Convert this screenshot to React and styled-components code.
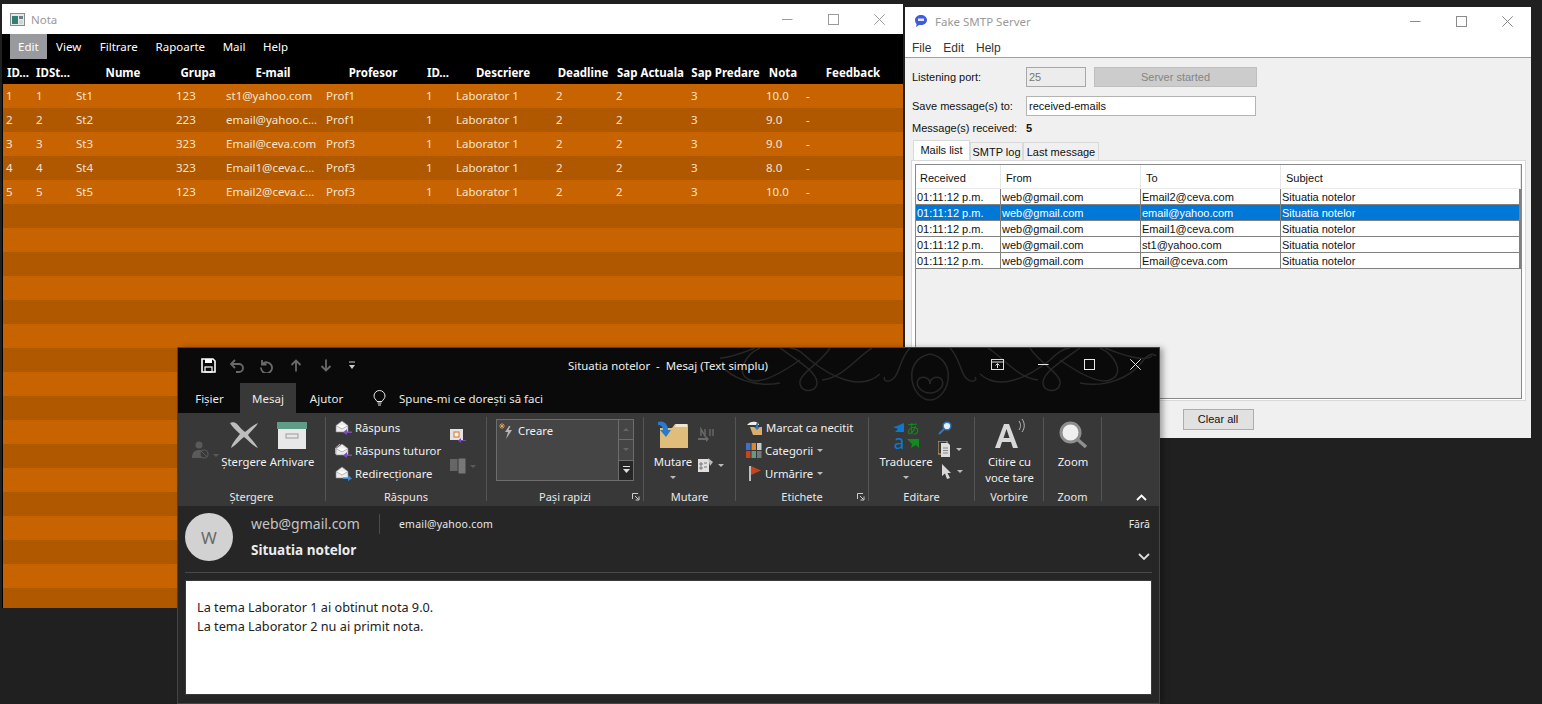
import React from 'react'
import styled, { createGlobalStyle } from 'styled-components'

const Global = createGlobalStyle`
  html, body { margin: 0; padding: 0; background: #202020; }
  body { width: 1542px; height: 704px; overflow: hidden; font-family: "Noto Sans", "Open Sans", sans-serif; }
  * { box-sizing: border-box; }
`

const Desktop = styled.div`
  position: relative;
  width: 1542px;
  height: 704px;
  background: #202020;
  overflow: hidden;
`

/* windows sit on a free canvas */
const Win = styled.div`
  position: absolute;
  left: ${p => p.$x}px;
  top: ${p => p.$y}px;
  width: ${p => p.$w}px;
  height: ${p => p.$h}px;
  display: flex;
  flex-direction: column;
  background: ${p => p.$bg};
  box-shadow: ${p => p.$shadow || 'none'};
`

const TitleBar = styled.div`
  display: flex;
  align-items: center;
  flex: none;
  height: ${p => p.$h}px;
  padding-left: ${p => p.$pad}px;
  padding-right: 1px;
  background: #fff;
  color: #9a9a9a;
  font-size: 11.5px;
`

const TitleText = styled.span`
  flex: 1;
  margin-left: ${p => p.$gap}px;
`

const CaptionBtns = styled.div`
  display: flex;
  align-items: center;
  color: ${p => p.$color};
`

const CaptionBtn = styled.span`
  display: flex;
  align-items: center;
  justify-content: center;
  width: ${p => p.$w || 46}px;
  height: 28px;
`

/* Nota window */
const NotaMenu = styled.div`
  display: flex;
  flex: none;
  height: 26px;
  padding-left: 8px;
  background: #000;
  color: #fff;
  font-size: 11.5px;
`

const NotaMenuItem = styled.div`
  display: flex;
  align-items: center;
  height: 25px;
  padding: 0 ${p => p.$pad}px;
  background: ${p => (p.$on ? '#989a9d' : 'transparent')};
`

const COLS = '30px 40px 100px 50px 100px 100px 30px 100px 60px 75px 75px 40px 100px'

const Grid = styled.div`
  display: grid;
  grid-template-columns: ${COLS};
  height: 24px;
  flex: none;
  align-items: center;
  font-size: 11.5px;
  background: ${p => p.$bg};
  color: #fff;
`

const Head = styled.div`
  text-align: center;
  font-weight: 700;
  white-space: nowrap;
  overflow: hidden;
`

const Cell = styled.div`
  padding-left: 3px;
  margin-top: -2px;
  color: #f3e6d8;
  white-space: nowrap;
`

const NotaBody = styled.div`
  flex: 1;
  margin-left: 1px;
  overflow: hidden;
  display: flex;
  flex-direction: column;
  background: #000;
`

/* SMTP window */
const SmtpMenu = styled.div`
  display: flex;
  flex: none;
  gap: 12px;
  align-items: center;
  height: 23px;
  padding: 3px 0 0 7px;
  background: #fff;
  border-bottom: 1px solid #a0a0a0;
  color: #333;
  font: 12px "Liberation Sans", sans-serif;
`

const SmtpBody = styled.div`
  flex: 1;
  display: flex;
  flex-direction: column;
  padding: 9px 5px 0 7px;
  background: #f0f0f0;
  color: #111;
  font: 11px "Liberation Sans", sans-serif;
`

const Field = styled.div`
  display: flex;
  align-items: center;
  height: ${p => p.$h}px;
  margin-bottom: ${p => p.$mb}px;
`

const Label = styled.span`
  width: 114px;
  flex: none;
`

const Input = styled.div`
  display: flex;
  align-items: center;
  width: ${p => p.$w}px;
  height: 20px;
  padding-left: 2px;
  border: 1px solid ${p => (p.$off ? '#a8a8a8' : '#b4b4b4')};
  background: ${p => (p.$off ? '#ececec' : '#fff')};
  color: ${p => (p.$off ? '#777' : '#111')};
`

const StartedBtn = styled.div`
  display: flex;
  align-items: center;
  justify-content: center;
  width: 163px;
  height: 20px;
  margin-left: 8px;
  background: #cccccc;
  border: 1px solid #bfbfbf;
  color: #858585;
`

const Count = styled.b`
  font-size: 11px;
`

const Tabs = styled.div`
  display: flex;
  align-items: flex-end;
  height: 20px;
  margin-left: 1px;
`

const Tab = styled.div`
  display: flex;
  align-items: center;
  justify-content: center;
  width: ${p => p.$w}px;
  height: ${p => (p.$on ? 20 : 18)}px;
  padding-bottom: ${p => (p.$on ? 2 : 0)}px;
  background: ${p => (p.$on ? '#fff' : '#f0f0f0')};
  border: 1px solid #d9d9d9;
  border-bottom: none;
  white-space: nowrap;
`

const TabPane = styled.div`
  height: 241px;
  margin-left: -1px;
  padding: 3px;
  background: #fff;
  border: 1px solid #d9d9d9;
`

const MailTable = styled.div`
  height: 235px;
  background: #f0f0f0;
  border: 1px solid #888;
`

const MAIL_COLS = '85px 140px 140px 1fr'

const MailHead = styled.div`
  display: grid;
  grid-template-columns: ${MAIL_COLS};
  height: 24px;
  background: #fff;
  border-bottom: 1px solid #eaeaea;
`

const MailHeadCell = styled.div`
  display: flex;
  align-items: center;
  padding: 3px 0 0 ${p => p.$pad}px;
  border-right: 1px solid #e6e6e6;
`

const MailRow = styled.div`
  display: grid;
  grid-template-columns: ${MAIL_COLS};
  height: 16px;
  background: ${p => (p.$sel ? '#0078d7' : '#fff')};
  color: ${p => (p.$sel ? '#fff' : '#111')};
  border-bottom: 1px solid #808080;
  border-right: 1px solid #808080;
`

const MailCell = styled.div`
  display: flex;
  align-items: center;
  padding-left: 1px;
  border-right: 1px solid #808080;
  white-space: nowrap;
`

const SmtpFoot = styled.div`
  display: flex;
  justify-content: center;
  padding: 8px 0 0 0;
  margin-left: -2px;
`

const ClearBtn = styled.div`
  display: flex;
  align-items: center;
  justify-content: center;
  width: 71px;
  height: 21px;
  padding-bottom: 1px;
  background: #e1e1e1;
  border: 1px solid #adadad;
  font-size: 11px;
`

/* Outlook window */
const TitleArea = styled.div`
  position: relative;
  flex: none;
  height: 65px;
  background: #0a0a0a;
`

const Swirl = styled.svg`
  position: absolute;
  left: 542px;
  top: 0;
  pointer-events: none;
`

const OutlookTitle = styled.div`
  position: relative;
  display: flex;
  align-items: center;
  height: 32px;
  padding-top: 3px;
  color: #eee;
  font-size: 11.4px;
`

const Qat = styled.div`
  display: flex;
  align-items: center;
  gap: 14px;
  width: 390px;
  padding-left: 23px;
`

const OutlookCaption = styled.div`
  white-space: nowrap;
`

const OutlookCtl = styled.div`
  position: absolute;
  right: 1px;
  top: 2px;
  display: flex;
  align-items: center;
`

const OutlookTabs = styled.div`
  position: relative;
  display: flex;
  align-items: flex-end;
  height: 33px;
  padding-left: 5px;
  color: #e8e8e8;
  font-size: 11.5px;
`

const OTab = styled.div`
  display: flex;
  align-items: center;
  justify-content: center;
  width: ${p => p.$w}px;
  height: 30px;
  padding-right: ${p => p.$pr || 0}px;
  background: ${p => (p.$on ? '#383838' : 'transparent')};
`

const Ask = styled.div`
  display: flex;
  align-items: center;
  gap: 13px;
  height: 30px;
  margin-left: 16px;
`

const Ribbon = styled.div`
  display: flex;
  flex: none;
  height: 93px;
  background: #383838;
  color: #f0f0f0;
  font-size: 11.3px;
`

const Group = styled.div`
  position: relative;
  display: flex;
  flex-direction: column;
  flex: none;
  width: ${p => p.$w}px;
  height: 84px;
  margin-top: 4px;
  border-right: ${p => (p.$plain ? 'none' : '1px solid #555')};
`

const GroupBody = styled.div`
  display: flex;
  flex: 1;
  padding: ${p => p.$pad || '0'};
  min-height: 0;
`

const GroupLabel = styled.div`
  height: 14px;
  line-height: 20px;
  text-align: center;
  font-size: 11px;
  color: #e8e8e8;
`

const Collapse = styled(GroupLabel)`
  text-align: right;
  padding-right: 10px;
`

const Launcher = styled.svg`
  position: absolute;
  right: 3px;
  bottom: 0;
`

const BigBtn = styled.div`
  display: flex;
  flex-direction: column;
  align-items: center;
  width: ${p => p.$w}px;
  flex: none;
  margin-left: ${p => p.$ml || 0}px;
  line-height: 16px;
  text-align: center;
  white-space: nowrap;
`

const BigIcon = styled.div`
  display: flex;
  align-items: flex-end;
  justify-content: center;
  height: 32px;
  margin-bottom: 5px;
`

const TranslateIcon = styled.div`
  display: grid;
  grid-template-columns: 14px 14px;
  grid-template-rows: 14px 14px;
  align-items: center;
  justify-items: center;
`

const TranslateGlyph = styled.span`
  color: ${p => p.$c};
  font-family: ${p => p.$font};
  font-size: ${p => p.$size}px;
  line-height: 14px;
`

const Caret = styled.span`
  display: inline-block;
  width: 0;
  height: 0;
  margin-left: ${p => p.$ml || 0}px;
  margin-top: ${p => p.$mt || 0}px;
  border-left: 3px solid transparent;
  border-right: 3px solid transparent;
  border-${p => (p.$up ? 'bottom' : 'top')}: 3px solid ${p => p.$c || '#bbb'};
`

const Stack = styled.div`
  display: flex;
  flex-direction: column;
  gap: ${p => p.$gap || 0}px;
  width: ${p => p.$w || 'auto'};
  padding-top: ${p => p.$top || 0}px;
  margin-left: ${p => p.$ml || 0}px;
  margin-top: ${p => p.$mt || 0}px;
  flex: none;
`

const SmallBtn = styled.div`
  display: flex;
  align-items: center;
  gap: 3px;
  height: ${p => p.$h || 23}px;
  margin-left: ${p => p.$ml || 0}px;
  white-space: nowrap;
`

const IconBox = styled.span`
  display: flex;
  justify-content: center;
  flex: none;
  width: ${p => p.$w || 16}px;
  padding-top: ${p => p.$top || 0}px;
`

const GalleryBox = styled.div`
  display: flex;
  width: 138px;
  height: 62px;
  border: 1px solid #6d6d6d;
  background: #454545;
`

const GalleryItem = styled.div`
  flex: 1;
  display: flex;
  align-items: flex-start;
  gap: 2px;
  padding: 3px 0 0 2px;
  line-height: 16px;
`

const GalleryScroll = styled.div`
  display: flex;
  flex-direction: column;
  width: 15px;
  border-left: 1px solid #6d6d6d;
`

const ScrollBtn = styled.div`
  display: flex;
  align-items: center;
  justify-content: center;
  flex: 1;
  border-bottom: 1px solid #6d6d6d;
  background: ${p => (p.$dark ? '#262626' : 'transparent')};
  &:last-child { border-bottom: none; }
`

const MailHeader = styled.div`
  position: relative;
  flex: none;
  height: 74px;
  padding: 7px 8px 0 7px;
  background: #262626;
  display: flex;
`

const HeadRule = styled.div`
  position: absolute;
  left: 7px;
  right: 7px;
  bottom: 7px;
  height: 1px;
  background: #4a4a4a;
`

const Avatar = styled.div`
  display: flex;
  align-items: center;
  justify-content: center;
  width: 48px;
  height: 48px;
  border-radius: 50%;
  background: #d2d2d2;
  color: #6a6a6a;
  font-size: 17px;
`

const HeadText = styled.div`
  display: flex;
  flex-direction: column;
  margin-left: 18px;
  flex: 1;
`

const FromLine = styled.div`
  display: flex;
  align-items: center;
  height: 21px;
`

const FromName = styled.span`
  color: #c4c4c4;
  font-size: 14px;
  width: 128px;
`

const FromSep = styled.span`
  width: 1px;
  height: 20px;
  background: #4a4a4a;
`

const ToName = styled.span`
  margin-left: 19px;
  color: #e8e8e8;
  font-size: 10.5px;
  letter-spacing: 0.2px;
  flex: 1;
`

const Fara = styled.span`
  color: #e8e8e8;
  font-size: 10.5px;
  margin-right: 1px;
`

const SubjectLine = styled.div`
  display: flex;
  justify-content: space-between;
  align-items: center;
  margin-top: 6px;
  color: #ececec;
  font-size: 13.5px;
  font-weight: 700;
`

const Chevron = styled.svg`
  margin: 13px 1px 0 0;
`

const MailBody = styled.div`
  flex: none;
  height: 115px;
  margin: 0 7px;
  padding: 17px 11px;
  background: #fff;
  border: 1px solid #3a3a3a;
  color: #222;
  font-size: 12.7px;
  line-height: 19px;
`

const OutlookFoot = styled.div`
  flex: 1;
  background: #262626;
`

const Mn = ({ c }) => <svg width="11" height="11" viewBox="0 0 11 11"><path d="M0 5.5h10.5" stroke={c} /></svg>
const Mx = ({ c }) => <svg width="11" height="11" viewBox="0 0 11 11"><rect x=".5" y=".5" width="10" height="10" fill="none" stroke={c} /></svg>
const Cl = ({ c }) => <svg width="11" height="11" viewBox="0 0 11 11"><path d="M.3.3l10.4 10.4M10.7.3L.3 10.7" stroke={c} /></svg>

const Caption = ({ c }) => (
  <CaptionBtns $color={c}>
    <CaptionBtn><Mn c={c} /></CaptionBtn>
    <CaptionBtn><Mx c={c} /></CaptionBtn>
    <CaptionBtn><Cl c={c} /></CaptionBtn>
  </CaptionBtns>
)

const rows = [
  ['1', '1', 'St1', '123', 'st1@yahoo.com', 'Prof1', '10.0'],
  ['2', '2', 'St2', '223', 'email@yahoo.c...', 'Prof1', '9.0'],
  ['3', '3', 'St3', '323', 'Email@ceva.com', 'Prof3', '9.0'],
  ['4', '4', 'St4', '323', 'Email1@ceva.c...', 'Prof3', '8.0'],
  ['5', '5', 'St5', '123', 'Email2@ceva.c...', 'Prof3', '10.0'],
]
const heads = ['ID...', 'IDSt...', 'Nume', 'Grupa', 'E-mail', 'Profesor', 'ID...', 'Descriere', 'Deadline', 'Sap Actuala', 'Sap Predare', 'Nota', 'Feedback']
const mails = ['Email2@ceva.com', 'email@yahoo.com', 'Email1@ceva.com', 'st1@yahoo.com', 'Email@ceva.com']

const NotaWindow = () => (
  <Win $x={2} $y={4} $w={901} $h={604} $bg="#000">
    <TitleBar $h={30} $pad={8}>
      <svg width="15" height="13" viewBox="0 0 15 13">
        <rect x=".5" y=".5" width="14" height="12" fill="#e8e8e8" stroke="#8a8a8a" />
        <rect x="2" y="3" width="6" height="8" fill="#2f7f72" />
        <rect x="9" y="3" width="4" height="3" fill="#6a7f8a" />
        <rect x="9" y="7" width="4" height="4" fill="#cfd6d8" />
      </svg>
      <TitleText $gap={6}>Nota</TitleText>
      <Caption c="#9a9a9a" />
    </TitleBar>
    <NotaMenu>
      <NotaMenuItem $on $pad={8}>Edit</NotaMenuItem>
      <NotaMenuItem $pad={9.5}>View</NotaMenuItem>
      <NotaMenuItem $pad={9}>Filtrare</NotaMenuItem>
      <NotaMenuItem $pad={8.8}>Rapoarte</NotaMenuItem>
      <NotaMenuItem $pad={8.8}>Mail</NotaMenuItem>
      <NotaMenuItem $pad={8.8}>Help</NotaMenuItem>
    </NotaMenu>
    <NotaBody>
      <Grid $bg="#000">{heads.map((h, i) => <Head key={i}>{h}</Head>)}</Grid>
      {Array.from({ length: 22 }).map((_, i) => {
        const r = rows[i]
        const bg = i % 2 ? '#b05800' : '#c76300'
        return (
          <Grid key={i} $bg={bg}>
            {r && [r[0], r[1], r[2], r[3], r[4], r[5], '1', 'Laborator 1', '2', '2', '3', r[6], '-'].map((c, j) => <Cell key={j}>{c}</Cell>)}
          </Grid>
        )
      })}
    </NotaBody>
  </Win>
)

const SmtpWindow = () => (
  <Win $x={905} $y={7} $w={626} $h={431} $bg="#fff">
    <TitleBar $h={28} $pad={9}>
      <svg width="14" height="14" viewBox="0 0 14 14">
        <path d="M1 6c0-3 3-5 6-5s6 2 6 5-3 5-6 5H5l-3 2 .6-3C1.500 9 1 7.500 1 6z" fill="#3d5ce0" />
        <rect x="4" y="4.500" width="6" height="2.500" fill="#e4e8fa" />
      </svg>
      <TitleText $gap={7}>Fake SMTP Server</TitleText>
      <Caption c="#8a8a8a" />
    </TitleBar>
    <SmtpMenu><span>File</span><span>Edit</span><span>Help</span></SmtpMenu>
    <SmtpBody>
      <Field $h={20} $mb={9}>
        <Label>Listening port:</Label>
        <Input $off $w={60}>25</Input>
        <StartedBtn>Server started</StartedBtn>
      </Field>
      <Field $h={20} $mb={5}>
        <Label>Save message(s) to:</Label>
        <Input $w={230}>received-emails</Input>
      </Field>
      <Field $h={14} $mb={5}>
        <Label>Message(s) received:</Label>
        <Count>5</Count>
      </Field>
      <Tabs>
        <Tab $on $w={57}>Mails list</Tab>
        <Tab $w={53}>SMTP log</Tab>
        <Tab $w={76}>Last message</Tab>
      </Tabs>
      <TabPane>
        <MailTable>
          <MailHead>
            <MailHeadCell $pad={4}>Received</MailHeadCell>
            <MailHeadCell $pad={5}>From</MailHeadCell>
            <MailHeadCell $pad={5}>To</MailHeadCell>
            <MailHeadCell $pad={5}>Subject</MailHeadCell>
          </MailHead>
          {mails.map((m, i) => (
            <MailRow key={m} $sel={i === 1}>
              <MailCell>01:11:12 p.m.</MailCell>
              <MailCell>web@gmail.com</MailCell>
              <MailCell>{m}</MailCell>
              <MailCell>Situatia notelor</MailCell>
            </MailRow>
          ))}
        </MailTable>
      </TabPane>
      <SmtpFoot><ClearBtn>Clear all</ClearBtn></SmtpFoot>
    </SmtpBody>
  </Win>
)

const Reply = ({ arrow = '#7b4db8', all, forward }) => (
  <svg width="17" height="15" viewBox="0 0 17 15">
    {all && <path d="M.5 11V5L5 1" fill="none" stroke="#bbb" />}
    <path d="M1 5.500L7 1l6 4.500V12H1z" fill="#ececec" stroke="#8a8a8a" strokeWidth=".6" />
    <path d="M1 5.500L7 9l6-3.500" fill="#fff" stroke="#8a8a8a" strokeWidth=".6" />
    {forward
      ? <path d="M8 11.500h5V9l4 3.500-4 2.500v-2H8z" fill="#3f86d0" />
      : <path d="M17 11.500h-5V9l-4 3.500 4 2.500v-2h5z" fill={arrow} />}
  </svg>
)

const Launch = () => (
  <Launcher width="8" height="8" viewBox="0 0 8 8">
    <path d="M.5 6V.5H6" fill="none" stroke="#ccc" />
    <path d="M3 3l3.500 3.500M7 3.500V7H3.500" fill="none" stroke="#ccc" />
  </Launcher>
)

const half = [
  'M0 6C12 8 20 18 18 32 16 46 6 52 0 52',
  'M0 36C0 29 9 27 12 32 15 38 8 45 0 45',
  'M20 0C30 10 30 24 36 30 42 36 48 32 45 29',
  'M50 26C70 44 100 28 120 12 126 6 134 0 140 0',
  'M58 0C76 12 88 30 108 32',
  'M100 0C108 14 132 26 130 36 128 46 112 44 113 34 114 24 130 14 150 0',
  'M130 12C150 26 170 36 180 32 196 26 184 6 170 0',
  'M150 35C175 40 200 30 212 14 216 8 222 4 226 8',
  'M175 0C195 8 215 14 222 8',
]

const Ornament = () => (
  <Swirl width="439" height="54" viewBox="0 0 439 54" fill="none" stroke="#272727" strokeWidth="1.5">
    <g transform="translate(210 0)">{half.map(d => <path key={d} d={d} />)}</g>
    <g transform="translate(210 0) scale(-1 1)">{half.map(d => <path key={d} d={d} />)}</g>
  </Swirl>
)

const Ribbons = () => (
  <Ribbon>
    <Group $w={148}>
      <GroupBody $pad="0 0 0 10px">
        <IconBox $w={34} $top={4}>
          <svg width="34" height="40" viewBox="0 0 34 40">
            <circle cx="11" cy="24" r="3.500" fill="#5a5a5a" />
            <path d="M4 37c0-6 3-8 7-8s7 2 7 8z" fill="#5a5a5a" />
            <circle cx="16" cy="33" r="4" fill="#383838" stroke="#5a5a5a" strokeWidth="1.200" />
            <path d="M13 30l6 6" stroke="#5a5a5a" />
            <path d="M25 33h6l-3 3z" fill="#5a5a5a" />
          </svg>
        </IconBox>
        <BigBtn $w={44}>
          <BigIcon>
            <svg width="30" height="27" viewBox="0 0 30 27">
              <path d="M1 1c2-1 5-1 7 1 3 3 5 6 8 8 4-3 8-7 13-9-2 4-7 8-10 12 3 4 7 8 10 13-5-2-10-8-14-11-4 3-8 8-13 11 1-5 6-10 9-14C7 8 3 5 1 1z" fill="#bdbdbd" />
            </svg>
          </BigIcon>
          Ștergere
        </BigBtn>
        <BigBtn $w={48} $ml={2}>
          <BigIcon>
            <svg width="30" height="27" viewBox="0 0 30 27">
              <rect x="0" y="0" width="30" height="7" fill="#5f9c86" />
              <rect x="1" y="7" width="28" height="20" fill="#e8e8e8" />
              <rect x="9" y="12" width="12" height="4" fill="none" stroke="#9a9a9a" />
            </svg>
          </BigIcon>
          Arhivare
        </BigBtn>
      </GroupBody>
      <GroupLabel>Ștergere</GroupLabel>
    </Group>
    <Group $w={161}>
      <GroupBody $pad="0 0 0 9px">
        <Stack $w="115px" $mt={-1}>
          <SmallBtn><Reply /> Răspuns</SmallBtn>
          <SmallBtn><Reply all /> Răspuns tuturor</SmallBtn>
          <SmallBtn><Reply forward /> Redirecționare</SmallBtn>
        </Stack>
        <Stack $gap={15} $top={12}>
          <svg width="16" height="14" viewBox="0 0 16 14">
            <rect x="0" y="0" width="13" height="11" fill="#e2e2e2" />
            <rect x="4" y="3" width="5" height="5" fill="#f4f4f4" stroke="#d9722a" />
            <path d="M16 11h-5V9l-3 2.500 3 2.500v-2h5z" fill="#7b4db8" />
          </svg>
          <SmallBtn $h={16}>
            <svg width="16" height="16" viewBox="0 0 16 16">
              <rect x="0" y="1" width="10" height="12" fill="#666" />
              <rect x="8" y="0" width="8" height="16" rx="1" fill="#777" stroke="#383838" />
            </svg>
            <Caret $c="#5a5a5a" $ml={1} />
          </SmallBtn>
        </Stack>
      </GroupBody>
      <GroupLabel>Răspuns</GroupLabel>
    </Group>
    <Group $w={157}>
      <GroupBody $pad="2px 0 0 9px">
        <GalleryBox>
          <GalleryItem>
            <svg width="17" height="17" viewBox="0 0 17 17">
              <path d="M10 3L6 9h3l-2 7 6-9H9.500l2-4z" fill="#b5b5b5" />
              <path d="M3 0v6M0 3h6M1 1l4 4M5 1L1 5" stroke="#e8a85a" strokeWidth=".8" />
            </svg>
            Creare
          </GalleryItem>
          <GalleryScroll>
            <ScrollBtn><Caret $up $c="#666" /></ScrollBtn>
            <ScrollBtn><Caret $c="#666" /></ScrollBtn>
            <ScrollBtn $dark>
              <svg width="9" height="8" viewBox="0 0 9 8"><path d="M1 .5h7" stroke="#ddd" /><path d="M1 3h7L4.500 7z" fill="#ddd" /></svg>
            </ScrollBtn>
          </GalleryScroll>
        </GalleryBox>
      </GroupBody>
      <GroupLabel>Pași rapizi</GroupLabel>
      <Launch />
    </Group>
    <Group $w={92}>
      <GroupBody $pad="0 0 0 9px">
        <BigBtn $w={40}>
          <BigIcon>
            <svg width="32" height="29" viewBox="0 0 32 29">
              <path d="M3 8h12l3-4h12a1 1 0 0 1 1 1v23H3z" fill="#e0bd7a" />
              <path d="M19 4h11v3H18z" fill="#f1e6d0" />
              <path d="M1 2c6-2 10 2 10 8h3l-5 7-6-7h3c0-3-2-5-5-5z" fill="#2b79c9" />
            </svg>
          </BigIcon>
          Mutare
          <Caret $mt={6} />
        </BigBtn>
        <Stack $gap={15} $top={10} $ml={5}>
          <svg width="17" height="16" viewBox="0 0 17 16">
            <path d="M0 11h8V9l3 3-3 3v-2H0z" fill="#6a6a6a" />
            <path d="M3 9V2l4 7V2M12 2v7M15 2v7" fill="none" stroke="#6a6a6a" strokeWidth="1.400" />
          </svg>
          <SmallBtn $h={14}>
            <svg width="16" height="14" viewBox="0 0 16 14">
              <rect x="0" y="1" width="11" height="13" fill="#e0e0e0" />
              <path d="M2 5h2v2H2zM2 9h2v2H2zM6 5h3M6 9h3" stroke="#777" fill="none" />
              <path d="M10 0l5 4-3 4z" fill="#bbb" />
            </svg>
            <Caret $ml={1} />
          </SmallBtn>
        </Stack>
      </GroupBody>
      <GroupLabel>Mutare</GroupLabel>
    </Group>
    <Group $w={133}>
      <GroupBody $pad="0 0 0 10px">
        <Stack $mt={-1}>
          <SmallBtn>
            <svg width="17" height="15" viewBox="0 0 17 15">
              <path d="M1 5c2-3 6-4 9-3 2 1 3 2 3 3H1z" fill="#eee" />
              <path d="M4 7h12v8H7z" fill="#d8ae6c" />
              <path d="M12 2v5h2l-3 3-3-3h2V4z" fill="#2b79c9" />
            </svg>
            Marcat ca necitit
          </SmallBtn>
          <SmallBtn>
            <svg width="16" height="15" viewBox="0 0 16 15">
              <rect x="0" y="0" width="4.500" height="7" fill="#3d72c8" />
              <rect x="5.500" y="0" width="4.500" height="7" fill="#e0852a" />
              <rect x="11" y="0" width="4.500" height="7" fill="#c9c9c9" />
              <rect x="0" y="8" width="4.500" height="7" fill="#c8451e" />
              <rect x="5.500" y="8" width="4.500" height="7" fill="#5f9c86" />
              <rect x="11" y="8" width="4.500" height="7" fill="#777" />
            </svg>
            Categorii<Caret $ml={1} />
          </SmallBtn>
          <SmallBtn>
            <svg width="16" height="15" viewBox="0 0 16 15">
              <rect x="3" y="0" width="2" height="15" fill="#bdbdbd" />
              <path d="M5 0l10 4.500L5 9z" fill="#c8421e" />
            </svg>
            Urmărire<Caret $ml={1} />
          </SmallBtn>
        </Stack>
      </GroupBody>
      <GroupLabel>Etichete</GroupLabel>
      <Launch />
    </Group>
    <Group $w={106}>
      <GroupBody $pad="0 0 0 10px">
        <BigBtn $w={54}>
          <BigIcon>
            <TranslateIcon>
              <svg width="12" height="11" viewBox="0 0 12 11"><path d="M11 0v9H2l3-3-5-2 4-1z" fill="#0b78d4" /></svg>
              <TranslateGlyph $c="#138a1c" $size={13} $font='"Noto Sans CJK JP", sans-serif'>あ</TranslateGlyph>
              <TranslateGlyph $c="#0b78d4" $size={19} $font='"Noto Sans", sans-serif'>a</TranslateGlyph>
              <svg width="12" height="11" viewBox="0 0 12 11"><path d="M0 2h12v9l-3-3-5 3 1-4z" fill="#138a1c" /></svg>
            </TranslateIcon>
          </BigIcon>
          Traducere
          <Caret $mt={6} />
        </BigBtn>
        <Stack $gap={6} $top={4} $ml={5}>
          <svg width="14" height="14" viewBox="0 0 14 14">
            <circle cx="9" cy="5" r="3.800" fill="#e6eef7" stroke="#2b79c9" strokeWidth="1.400" />
            <path d="M6 8l-5 5" stroke="#2b79c9" strokeWidth="2" />
          </svg>
          <SmallBtn $h={16}>
            <svg width="13" height="16" viewBox="0 0 13 16">
              <rect x="0" y="0" width="9" height="13" fill="none" stroke="#d8ae6c" />
              <path d="M3 2h7l2 2v12H3z" fill="#ddd" />
              <path d="M5 7h5M5 9.500h5M5 12h5" stroke="#888" />
            </svg>
            <Caret $ml={2} />
          </SmallBtn>
          <SmallBtn $h={16} $ml={3}>
            <svg width="11" height="15" viewBox="0 0 11 15"><path d="M1 0v12l3-2.500L6 15l3-1-2.500-5H10z" fill="#d8d8d8" /></svg>
            <Caret $ml={2} />
          </SmallBtn>
        </Stack>
      </GroupBody>
      <GroupLabel>Editare</GroupLabel>
    </Group>
    <Group $w={69}>
      <GroupBody>
        <BigBtn $w={69}>
          <BigIcon>
            <svg width="32" height="31" viewBox="0 0 32 31">
              <path d="M10 6h5l9 24h-5l-2-6H8l-2 6H1zm2.500 5L9.500 20h6z" fill="#d8d8d8" />
              <path d="M25 3c2 3 2 6 0 9M28 1c3 4 3 9 0 13" fill="none" stroke="#bbb" />
            </svg>
          </BigIcon>
          Citire cu<br />voce tare
        </BigBtn>
      </GroupBody>
      <GroupLabel>Vorbire</GroupLabel>
    </Group>
    <Group $w={58}>
      <GroupBody>
        <BigBtn $w={58}>
          <BigIcon>
            <svg width="29" height="28" viewBox="0 0 29 28">
              <circle cx="11.500" cy="11.500" r="9.500" fill="#f0f0f0" stroke="#8f8f8f" strokeWidth="3" />
              <path d="M18 18l9 8" stroke="#8f8f8f" strokeWidth="3.500" />
            </svg>
          </BigIcon>
          Zoom
        </BigBtn>
      </GroupBody>
      <GroupLabel>Zoom</GroupLabel>
    </Group>
    <Group $w={55} $plain>
      <GroupBody />
      <Collapse>
        <svg width="11" height="7" viewBox="0 0 11 7"><path d="M1 6l4.500-4.500L10 6" fill="none" stroke="#fff" strokeWidth="1.800" /></svg>
      </Collapse>
    </Group>
  </Ribbon>
)

const OutlookWindow = () => (
  <Win $x={178} $y={348} $w={981} $h={355} $bg="#262626" $shadow="0 0 0 1px #444, 4px 0 6px rgba(0,0,0,0.35)">
    <TitleArea>
      <Ornament />
      <OutlookTitle>
        <Qat>
          <svg width="15" height="15" viewBox="0 0 15 15">
            <path d="M1 1h11l2 2v11H1z" fill="none" stroke="#fff" strokeWidth="1.600" />
            <rect x="4" y="1" width="7" height="4" fill="#fff" />
            <rect x="4" y="9" width="7" height="5" fill="none" stroke="#fff" strokeWidth="1.200" />
          </svg>
          <svg width="15" height="14" viewBox="0 0 15 14"><path d="M5 1L1 5l4 4M1 5h8a4 4 0 0 1 0 8H6" fill="none" stroke="#6a6a6a" strokeWidth="1.800" /></svg>
          <svg width="15" height="14" viewBox="0 0 15 14"><path d="M3 1v4.500h4.500M3.500 5A5.500 5.500 0 1 1 2 8.500" fill="none" stroke="#6a6a6a" strokeWidth="1.800" /></svg>
          <svg width="16" height="13" viewBox="0 0 16 13"><path d="M8 12.500V2M3.500 6L8 1.500 12.500 6" fill="none" stroke="#6a6a6a" strokeWidth="1.800" /></svg>
          <svg width="16" height="13" viewBox="0 0 16 13"><path d="M8 .5V11M3.500 7L8 11.500 12.500 7" fill="none" stroke="#6a6a6a" strokeWidth="1.800" /></svg>
          <svg width="8" height="9" viewBox="0 0 8 9"><path d="M1 1h6" stroke="#ccc" /><path d="M1 4h6L4 8z" fill="#ccc" /></svg>
        </Qat>
        <OutlookCaption>Situatia notelor&nbsp; -&nbsp; Mesaj (Text simplu)</OutlookCaption>
        <OutlookCtl>
          <CaptionBtn>
            <svg width="13" height="11" viewBox="0 0 13 11">
              <rect x=".5" y=".5" width="12" height="10" fill="none" stroke="#ddd" />
              <path d="M.5 3h12M6.500 9V5M4.500 6.500l2-2 2 2" fill="none" stroke="#ddd" />
            </svg>
          </CaptionBtn>
          <CaptionBtn><Mn c="#e8e8e8" /></CaptionBtn>
          <CaptionBtn><Mx c="#e8e8e8" /></CaptionBtn>
          <CaptionBtn><Cl c="#e8e8e8" /></CaptionBtn>
        </OutlookCtl>
      </OutlookTitle>
      <OutlookTabs>
        <OTab $w={57} $pr={4}>Fișier</OTab>
        <OTab $w={56} $on>Mesaj</OTab>
        <OTab $w={61}>Ajutor</OTab>
        <Ask>
          <svg width="13" height="16" viewBox="0 0 13 16">
            <path d="M4 11.500C3 9.500 1 8.500 1 6a5.500 5.500 0 0 1 11 0c0 2.500-2 3.500-3 5.500z" fill="none" stroke="#e8e8e8" />
            <path d="M4.500 13h4M5 15h3" stroke="#e8e8e8" />
          </svg>
          Spune-mi ce dorești să faci
        </Ask>
      </OutlookTabs>
    </TitleArea>
    <Ribbons />
    <MailHeader>
      <Avatar>W</Avatar>
      <HeadText>
        <FromLine>
          <FromName>web@gmail.com</FromName>
          <FromSep />
          <ToName>email@yahoo.com</ToName>
          <Fara>Fără</Fara>
        </FromLine>
        <SubjectLine>
          Situatia notelor
          <Chevron width="12" height="7" viewBox="0 0 12 7"><path d="M1 1l5 5 5-5" fill="none" stroke="#ddd" strokeWidth="1.800" /></Chevron>
        </SubjectLine>
      </HeadText>
      <HeadRule />
    </MailHeader>
    <MailBody>
      La tema Laborator 1 ai obtinut nota 9.0.<br />
      La tema Laborator 2 nu ai primit nota.
    </MailBody>
    <OutlookFoot />
  </Win>
)

export default function App() {
  return (
    <>
      <Global />
      <Desktop>
        <NotaWindow />
        <SmtpWindow />
        <OutlookWindow />
      </Desktop>
    </>
  )
}
